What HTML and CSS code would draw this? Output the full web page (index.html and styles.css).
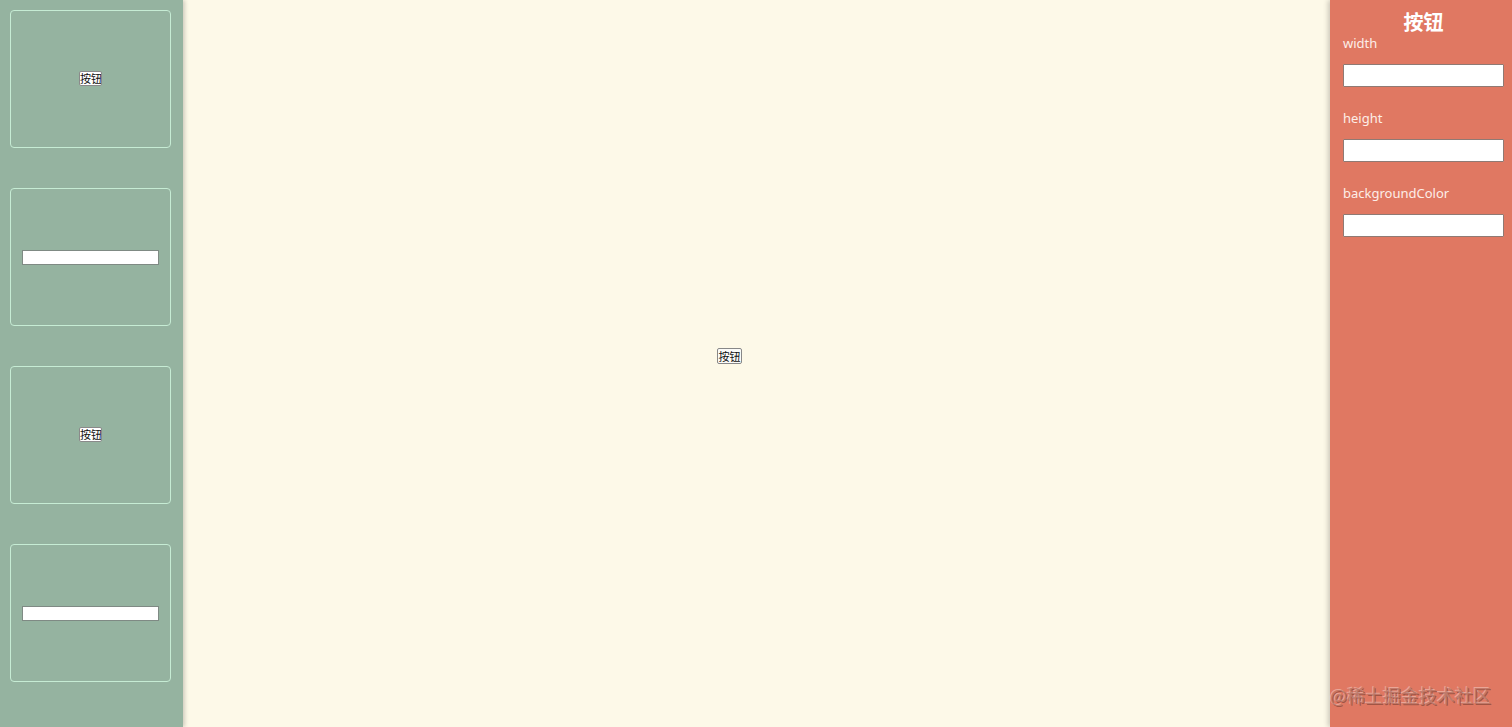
FILE: index.html
```html
<!DOCTYPE html>
<html lang="zh">
<head>
<meta charset="utf-8">
<title>编辑器</title>
<link rel="stylesheet" href="styles.css">
</head>
<body>
<div class="app">
  <aside class="palette">
    <div class="card"><button class="btn">按钮</button></div>
    <div class="card"><input class="card-input" type="text"></div>
    <div class="card"><button class="btn">按钮</button></div>
    <div class="card"><input class="card-input" type="text"></div>
  </aside>
  <main class="canvas">
    <button class="btn canvas-item" style="left:534px;top:348px;">按钮</button>
  </main>
  <aside class="props">
    <h2 class="props-title">按钮</h2>
    <div class="field">
      <label class="field-label">width</label>
      <input class="field-input" type="text">
    </div>
    <div class="field">
      <label class="field-label">height</label>
      <input class="field-input" type="text">
    </div>
    <div class="field">
      <label class="field-label">backgroundColor</label>
      <input class="field-input" type="text">
    </div>
  </aside>
</div>
<div class="watermark">@稀土掘金技术社区</div>
</body>
</html>
```

FILE: styles.css
```css
html, body {
  margin: 0;
  padding: 0;
  height: 100%;
  overflow: hidden;
}
body {
  font-family: "Noto Sans", "Noto Sans CJK SC", sans-serif;
}
.app {
  display: flex;
  height: 727px;
}
.palette {
  width: 183px;
  flex: none;
  box-sizing: border-box;
  background: #95b3a0;
  padding: 10px 12px 0 10px;
  display: flex;
  flex-direction: column;
  gap: 40px;
  box-shadow: 2px 0 4px rgba(0,0,0,0.18);
  position: relative;
  z-index: 2;
}
.card {
  width: 161px;
  height: 138px;
  box-sizing: border-box;
  border: 1px solid #c6ecd4;
  border-radius: 4px;
  display: flex;
  align-items: center;
  justify-content: center;
}
.btn {
  font-family: "Noto Sans CJK SC", sans-serif;
  font-size: 11px;
  line-height: 12px;
  padding: 0;
  width: 23px;
  height: 15px;
  white-space: nowrap;
  overflow: hidden;
  background: #fff;
  border: 1px solid #8a8a8a;
  border-radius: 2px;
  color: #111;
  box-sizing: border-box;
  text-align: center;
}
.card .btn {
  margin-top: -2px;
}
.card-input {
  width: 137px;
  height: 15px;
  box-sizing: border-box;
  border: 1px solid #7f8a84;
  background: #fff;
  padding: 0;
  margin-top: 0;
}
.canvas {
  flex: 1;
  background: #fdf9e8;
  position: relative;
}
.canvas-item {
  position: absolute;
  width: 25px;
  height: 16px;
  background: #fbfbf8;
  border-color: #888;
}
.props {
  width: 182px;
  flex: none;
  box-sizing: border-box;
  background: #e07862;
  padding: 10px 8px 0 13px;
  box-shadow: -2px 0 5px rgba(0,0,0,0.2);
  position: relative;
  z-index: 2;
  color: #fff;
}
.props-title {
  margin: 0;
  text-align: center;
  font-size: 20px;
  line-height: 24px;
  font-weight: bold;
  font-family: "Noto Sans CJK SC", sans-serif;
}
.field {
  display: flex;
  flex-direction: column;
  gap: 11px;
  margin-bottom: 22px;
}
.field-label {
  font-size: 13px;
  line-height: 19px;
  color: #fdeee8;
}
.field-input {
  width: 161px;
  height: 23px;
  box-sizing: border-box;
  border: 1px solid #8f7a74;
  border-radius: 1px;
  background: #fff;
  padding: 0 2px;
}
.watermark {
  position: absolute;
  left: 1330px;
  top: 682px;
  font-family: "Noto Sans CJK SC", sans-serif;
  font-size: 18px;
  line-height: 26px;
  color: rgba(190, 120, 105, 0.9);
  text-shadow: -1px -1px 0 rgba(255,255,255,0.35), 1px 1px 0 rgba(80,40,30,0.45);
  z-index: 5;
}
```
